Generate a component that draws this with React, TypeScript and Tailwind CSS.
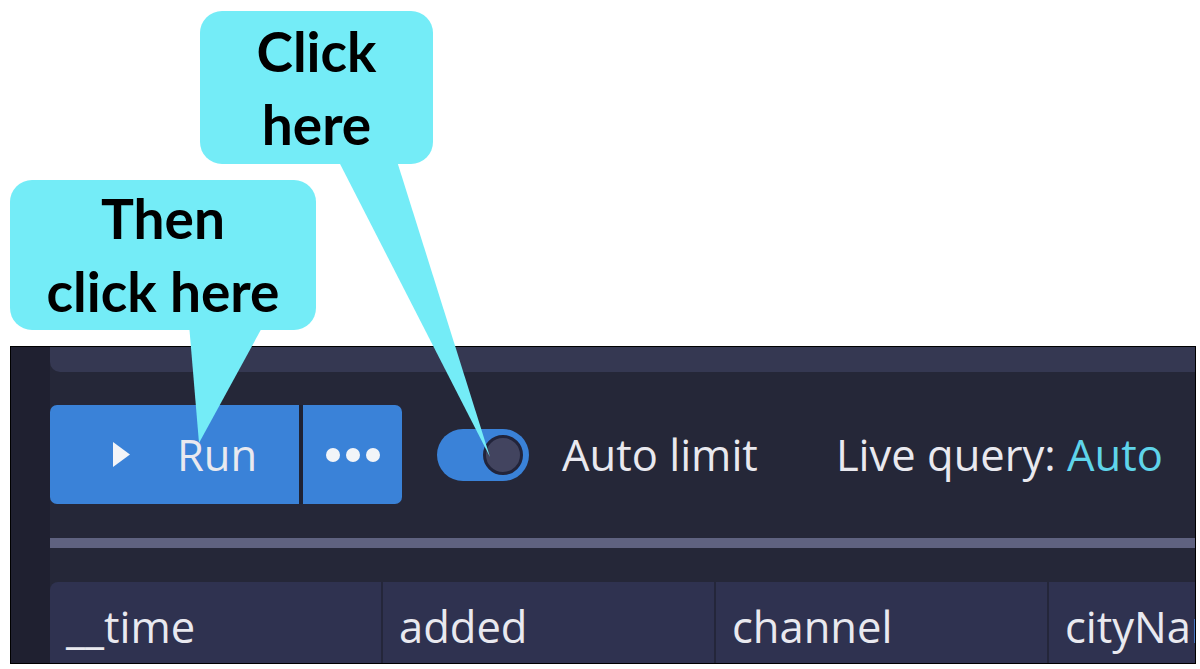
import React from 'react';

const columns = ['__time', 'added', 'channel', 'cityName'];

const Callout: React.FC<{ lines: string[]; className: string }> = ({ lines, className }) => (
  <div
    className={`absolute flex flex-col items-center justify-center rounded-[22px] bg-[#74ecf7] text-black font-bold text-[55px] leading-[73px] ${className}`}
    style={{ fontFamily: 'Lato, "Noto Sans", sans-serif' }}
  >
    {lines.map((l) => (
      <span key={l} className="whitespace-nowrap">{l}</span>
    ))}
  </div>
);

const App: React.FC = () => {
  return (
    <div className="relative w-[1200px] h-[669px] overflow-hidden bg-white">
      {/* Query panel */}
      <div className="pt-[346px] pl-[10px]">
        <div
          className="flex w-[1186px] h-[318px] overflow-hidden border border-black bg-[#252738] text-[#e9e9ef] text-[43.5px]"
          style={{ fontFamily: '"Open Sans", "Noto Sans", sans-serif' }}
        >
          <div className="w-[39px] shrink-0 bg-[#1f2030]" />
          <div className="flex flex-1 flex-col min-w-0">
            <div className="h-[25px] shrink-0 rounded-bl-[10px] bg-[#353852]" />

            {/* Toolbar */}
            <div className="mt-[33px] flex h-[99px] shrink-0 items-center">
              <div className="flex h-full overflow-hidden rounded-[7px]">
                <button className="flex w-[249px] h-full items-center bg-[#3a82d8] pl-[62px]">
                  <svg width="19" height="27" viewBox="0 0 19 27" className="mr-[46px]">
                    <path d="M1 1 L18 13.5 L1 26 Z" fill="#f2f4f8" />
                  </svg>
                  <span className="leading-none">Run</span>
                </button>
                <div className="w-[4px] h-full bg-[#1f2233]" />
                <button className="flex w-[99px] h-full items-center justify-center gap-[6px] bg-[#3a82d8]">
                  <span className="w-[14px] h-[14px] rounded-full bg-[#f2f4f8]" />
                  <span className="w-[14px] h-[14px] rounded-full bg-[#f2f4f8]" />
                  <span className="w-[14px] h-[14px] rounded-full bg-[#f2f4f8]" />
                </button>
              </div>

              <div className="ml-[35px] flex w-[92px] h-[52px] items-center justify-end rounded-full bg-[#3a82d8] pr-[6px]">
                <span className="w-[40px] h-[40px] rounded-full border-[3px] border-[#22243a] bg-[#42445f]" />
              </div>

              <span className="ml-[33px] whitespace-nowrap leading-none">Auto limit</span>
              <span className="ml-[78px] whitespace-nowrap leading-none">
                Live query: <span className="text-[#5fd4ea]">Auto</span>
              </span>
            </div>

            <div className="mt-[34px] h-[10px] shrink-0 bg-[#5f6280]" />

            {/* Results header */}
            <div className="mt-[34px] flex flex-1 overflow-hidden rounded-tl-[8px] bg-[#2f3250]">
              {columns.map((c, i) => (
                <div
                  key={c}
                  className={`flex shrink-0 pl-[16px] pt-[20px] ${i > 0 ? 'w-[333px] border-l-2 border-[#24263a]' : 'w-[331px]'}`}
                >
                  <span className="whitespace-nowrap leading-[50px]">{c}</span>
                </div>
              ))}
            </div>
          </div>
        </div>
      </div>

      {/* Callout tails */}
      <svg className="pointer-events-none absolute left-0 top-0" width="1200" height="669">
        <polygon points="337,158 396,158 490,457" fill="#74ecf7" />
        <polygon points="189,324 264,324 199,443" fill="#74ecf7" />
      </svg>

      <Callout lines={['Click', 'here']} className="left-[200px] top-[11px] w-[233px] h-[153px]" />
      <Callout lines={['Then', 'click here']} className="left-[10px] top-[180px] w-[306px] h-[150px]" />
    </div>
  );
};

export default App;
